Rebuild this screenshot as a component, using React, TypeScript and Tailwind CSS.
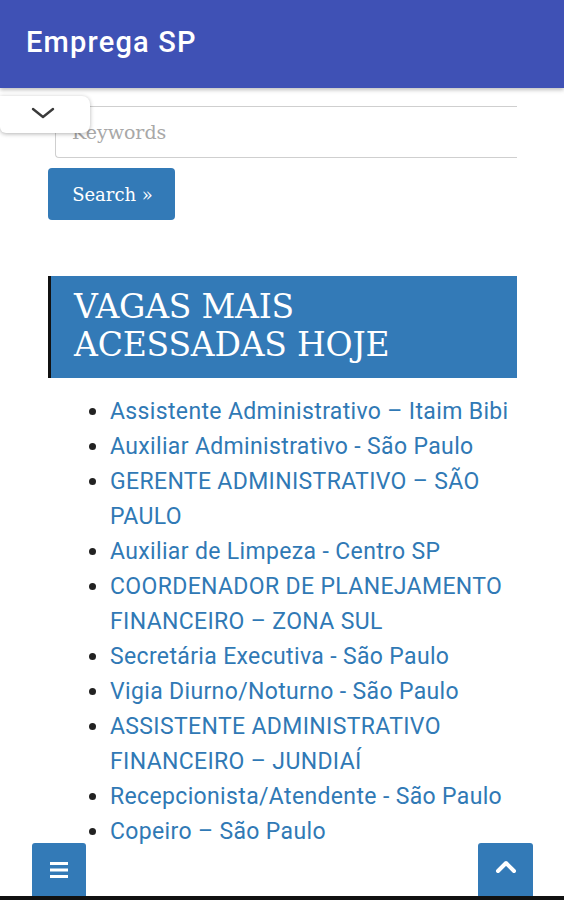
import React from "react";

const items = [
  "Assistente Administrativo – Itaim Bibi",
  "Auxiliar Administrativo - São Paulo",
  "GERENTE ADMINISTRATIVO – SÃO PAULO",
  "Auxiliar de Limpeza - Centro SP",
  "COORDENADOR DE PLANEJAMENTO FINANCEIRO – ZONA SUL",
  "Secretária Executiva - São Paulo",
  "Vigia Diurno/Noturno - São Paulo",
  "ASSISTENTE ADMINISTRATIVO FINANCEIRO – JUNDIAÍ",
  "Recepcionista/Atendente - São Paulo",
  "Copeiro – São Paulo",
];

export default function App() {
  return (
    <div className="relative w-[564px] h-[900px] overflow-hidden bg-white">
      <header className="relative z-10 h-[88px] bg-[#3f51b5] flex items-center pl-[26px] shadow-[0_2px_4px_rgba(0,0,0,0.25)]">
        <h1 className="text-white text-[29px] font-medium tracking-[1.2px] [font-family:Roboto,sans-serif] pb-[2px]">
          Emprega SP
        </h1>
      </header>

      <div className="absolute left-0 top-[96px] z-20 w-[90px] h-[37px] bg-white rounded-br-[8px] rounded-tr-[8px] rounded-bl-[6px] shadow-[0_1px_4px_rgba(0,0,0,0.3)] flex items-center justify-center">
        <svg width="26" height="14" viewBox="0 0 26 14" className="-ml-[4px] -mt-[4px]">
          <path d="M3 3 L13 11 L23 3" fill="none" stroke="#3a3a3a" strokeWidth="2.4" strokeLinecap="round" strokeLinejoin="round" />
        </svg>
      </div>

      <main className="w-[517px] overflow-hidden pt-[18px]">
        <div className="pl-[55px]">
          <div className="h-[52px] border border-r-0 border-[#cfcfcf] rounded-l-[4px] flex items-center pl-[16px] text-[19px] text-[#a8a8a8] [font-family:'DejaVu_Serif',serif]">
            Keywords
          </div>
        </div>
        <div className="pl-[48px] mt-[10px]">
          <div className="w-[127px] h-[52px] bg-[#337ab7] rounded-[4px] flex items-center justify-center text-white [font-family:'DejaVu_Serif',serif]">
            <span className="text-[18px] pl-[2px]">Search »</span>
          </div>
        </div>

        <div className="ml-[48px] mt-[56px] bg-[#337ab7] border-l-[3px] border-[#111] pl-[23px] pt-[12px] pb-[14px]">
          <h2 className="text-white text-[33px] leading-[38px] [font-family:'DejaVu_Serif',serif] tracking-[-0.2px]">
            VAGAS MAIS
            <br />
            ACESSADAS HOJE
          </h2>
        </div>

        <ul className="mt-[16px] pl-[110px] pr-[4px] [font-family:Roboto,sans-serif] text-[23px] leading-[35px] tracking-[0.35px] text-[#3079b5] list-disc marker:text-[#222]">
          {items.map((t) => (
            <li key={t}>{t}</li>
          ))}
        </ul>
      </main>

      <div className="absolute left-[32px] top-[843px] w-[54px] h-[54px] bg-[#337ab7] rounded-t-[3px] flex items-center justify-center">
        <svg width="20" height="18" viewBox="0 0 20 18">
          <rect x="1" y="1" width="18" height="3" fill="white" />
          <rect x="1" y="7.5" width="18" height="3" fill="white" />
          <rect x="1" y="14" width="18" height="3" fill="white" />
        </svg>
      </div>
      <div className="absolute left-[478px] top-[843px] w-[55px] h-[54px] bg-[#337ab7] rounded-t-[3px] flex items-center justify-center">
        <svg width="22" height="14" viewBox="0 0 22 14" className="-mt-[6px]">
          <path d="M3 11 L11 3 L19 11" fill="none" stroke="white" strokeWidth="4" strokeLinecap="round" strokeLinejoin="round" />
        </svg>
      </div>
      <div className="absolute left-0 bottom-0 w-full h-[4px] bg-[#111]" />
    </div>
  );
}
